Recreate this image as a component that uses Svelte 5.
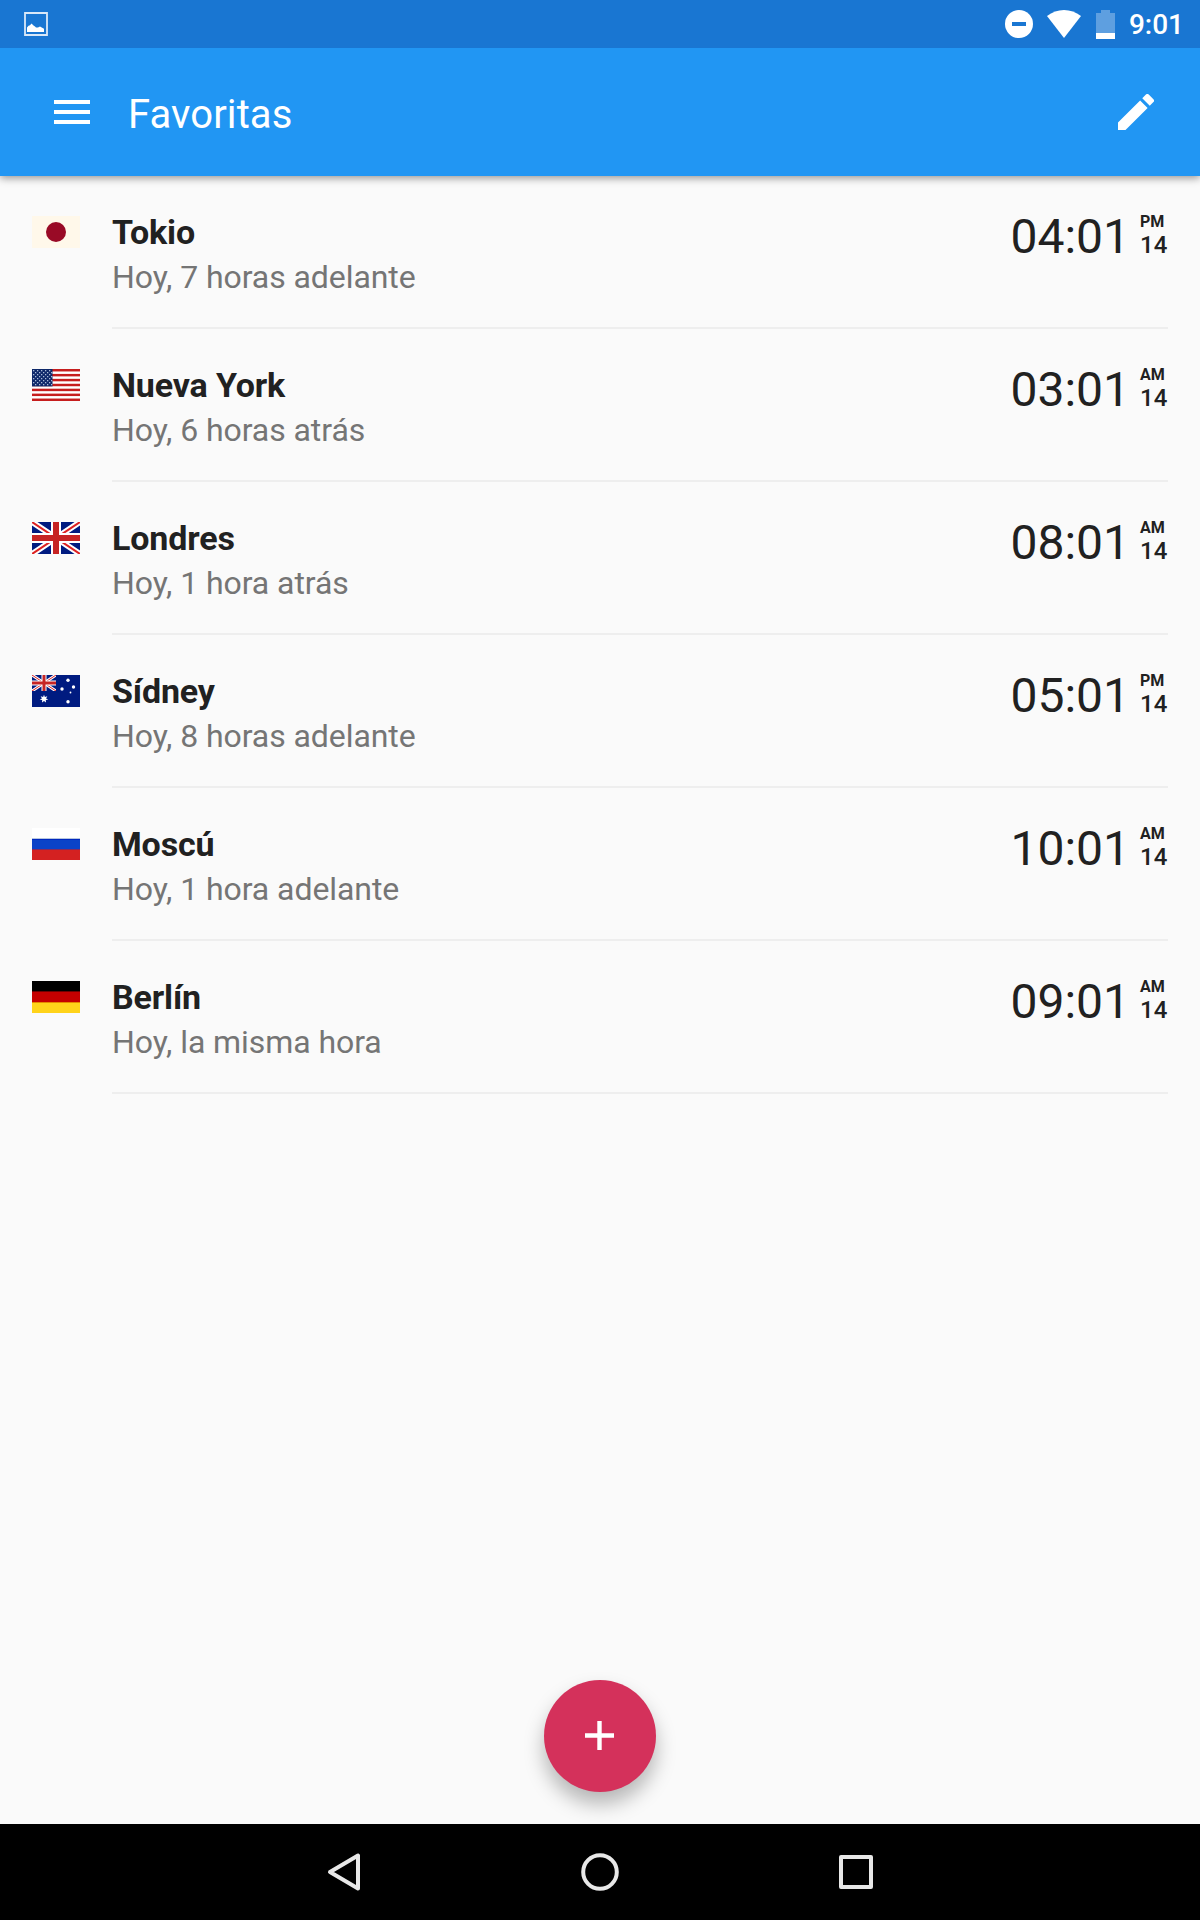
<script lang="ts">
  interface City {
    name: string;
    offset: string;
    time: string;
    period: string;
    day: number;
    flag: string;
  }

  const cities: City[] = [
    { name: "Tokio", offset: "Hoy, 7 horas adelante", time: "04:01", period: "PM", day: 14, flag: "jp" },
    { name: "Nueva York", offset: "Hoy, 6 horas atrás", time: "03:01", period: "AM", day: 14, flag: "us" },
    { name: "Londres", offset: "Hoy, 1 hora atrás", time: "08:01", period: "AM", day: 14, flag: "gb" },
    { name: "Sídney", offset: "Hoy, 8 horas adelante", time: "05:01", period: "PM", day: 14, flag: "au" },
    { name: "Moscú", offset: "Hoy, 1 hora adelante", time: "10:01", period: "AM", day: 14, flag: "ru" },
    { name: "Berlín", offset: "Hoy, la misma hora", time: "09:01", period: "AM", day: 14, flag: "de" },
  ];

  const stripes = [0, 1, 2, 3, 4, 5, 6];
  const starRows = [0, 1, 2, 3, 4, 5, 6, 7];
  const starCols = [0, 1, 2, 3, 4];
</script>

{#snippet unionJack()}
  <rect width="48" height="32" fill="#001b80" />
  <path d="M0 0 48 32M48 0 0 32" stroke="#fff" stroke-width="6" />
  <path d="M0 0 48 32M48 0 0 32" stroke="#d22" stroke-width="2" />
  <path d="M24 0V32M0 16H48" stroke="#fff" stroke-width="10" />
  <path d="M24 0V32M0 16H48" stroke="#c62424" stroke-width="6" />
{/snippet}

{#snippet flag(code: string)}
  <svg class="flag" viewBox="0 0 48 32" aria-hidden="true">
    {#if code === "jp"}
      <rect width="48" height="32" fill="#fff8ea" />
      <circle cx="24" cy="16" r="10" fill="#990a26" />
    {:else if code === "us"}
      <rect width="48" height="32" fill="#fff" />
      {#each stripes as i}
        <rect y={i * 4.923} width="48" height="2.46" fill="#c61d1d" />
      {/each}
      <rect width="20.5" height="17.4" fill="#0e2869" />
      {#each starRows as r}
        {#each starCols as c}
          <rect x={1 + c * 4 + (r % 2) * 2} y={1 + r * 2} width="1.3" height="1.3" fill="#a9bbd6" />
        {/each}
      {/each}
    {:else if code === "gb"}
      {@render unionJack()}
    {:else if code === "au"}
      <rect width="48" height="32" fill="#001b80" />
      <svg width="24" height="16" viewBox="0 0 48 32">
        {@render unionJack()}
      </svg>
      <path
        d="m12 19.8.9 2.3 2.4-.8-1.2 2.1 2.2 1.3-2.5.4.2 2.5-2-1.7-2 1.7.2-2.5-2.5-.4 2.2-1.3-1.2-2.1 2.4.8z"
        fill="#fff"
      />
      <g fill="#fff">
        <circle cx="36" cy="5.3" r="1.7" />
        <circle cx="30" cy="14" r="1.7" />
        <circle cx="41.5" cy="12" r="1.7" />
        <circle cx="38.5" cy="17.5" r=".9" />
        <circle cx="36" cy="26.8" r="1.7" />
      </g>
    {:else if code === "ru"}
      <rect width="48" height="32" fill="#fff" />
      <rect y="10" width="48" height="12" fill="#0b43c8" />
      <rect y="10" width="48" height="1" fill="#b6c6e0" />
      <rect y="11" width="48" height="1" fill="#0028c0" />
      <rect y="21" width="48" height="11" fill="#d42121" />
      <rect y="21" width="48" height="1" fill="#822b60" />
    {:else}
      <rect width="48" height="32" fill="#000" />
      <rect y="10" width="48" height="12" fill="#c50000" />
      <rect y="10" width="48" height="1" fill="#700000" />
      <rect y="21" width="48" height="11" fill="#ffd31a" />
      <rect y="21" width="48" height="1" fill="#e58a00" />
    {/if}
  </svg>
{/snippet}

<div class="screen">
  <div class="statusbar">
    <svg class="shot" viewBox="0 0 24 24" aria-hidden="true">
      <path d="M1 1H23V23H1z" fill="none" stroke="#d9e8f8" stroke-width="1.8" />
      <path d="M3 20v-4.5l1.5-1.7 1.5-.6 1.5-1.6 2 2 1.5.8 1 1.2 2-.1 2-.9 2.2 1.2 1.8 1v3.2z" fill="#fff" />
    </svg>
    <div class="status-icons">
      <svg class="dnd" viewBox="0 0 28 28" aria-hidden="true">
        <circle cx="14" cy="14" r="14" fill="#fff" />
        <rect x="7" y="12" width="14" height="4" fill="#1976d2" />
      </svg>
      <svg class="wifi" viewBox="0 0 34 28" aria-hidden="true">
        <path d="M0 6C5 2 11 0 17 0s12 2 17 6L17 28z" fill="#fff" />
      </svg>
      <svg class="battery" viewBox="0 0 19 29" aria-hidden="true">
        <path d="M5 0h9v3h5v20H0V3h5z" fill="#5e9fe0" />
        <rect y="23" width="19" height="6" fill="#fff" />
      </svg>
      <span class="clock">9:01</span>
    </div>
  </div>

  <header class="toolbar">
    <button type="button" class="icon-btn" aria-label="Menú">
      <svg class="menu" viewBox="0 0 36 24">
        <path d="M0 2H36M0 12H36M0 22H36" stroke="#fff" stroke-width="4" />
      </svg>
    </button>
    <h1>Favoritas</h1>
    <button type="button" class="icon-btn edit" aria-label="Editar">
      <svg class="pencil" viewBox="3 3 18 18">
        <path
          d="M3 17.25V21h3.75L17.81 9.94l-3.75-3.75L3 17.25zM20.71 7.04a1 1 0 0 0 0-1.41l-2.34-2.34a1 1 0 0 0-1.41 0l-1.83 1.83 3.75 3.75 1.83-1.83z"
          fill="#fff"
        />
      </svg>
    </button>
  </header>

  <main class="list">
    {#each cities as city}
      <div class="row">
        {@render flag(city.flag)}
        <div class="row-body">
          <div class="place">
            <div class="name">{city.name}</div>
            <div class="offset">{city.offset}</div>
          </div>
          <div class="time">{city.time}</div>
          <div class="meta">
            <div class="period">{city.period}</div>
            <div class="day">{city.day}</div>
          </div>
        </div>
      </div>
    {/each}
  </main>

  <div class="fab-area">
    <button type="button" class="fab" aria-label="Añadir">
      <svg viewBox="0 0 29 29">
        <path d="M14.5 0V29M0 14.5H29" stroke="#fff" stroke-width="4.4" />
      </svg>
    </button>
  </div>

  <nav class="navbar">
    <svg viewBox="0 0 48 48" aria-hidden="true">
      <path d="M38 7.5V40.5L10 24z" />
    </svg>
    <svg viewBox="0 0 48 48" aria-hidden="true">
      <circle cx="24" cy="24" r="16.8" />
    </svg>
    <svg viewBox="0 0 48 48" aria-hidden="true">
      <rect x="9" y="9" width="30" height="30" />
    </svg>
  </nav>
</div>

<style>
  :global(body) {
    margin: 0;
  }
  .screen {
    display: flex;
    flex-direction: column;
    width: 1200px;
    height: 1920px;
    background: #fafafa;
    color: #212121;
    font-family: Roboto, "Liberation Sans", sans-serif;
  }
  svg {
    display: block;
    flex: none;
  }
  button {
    padding: 0;
    border: none;
    background: transparent;
  }
  .statusbar {
    display: flex;
    align-items: center;
    justify-content: space-between;
    box-sizing: border-box;
    height: 48px;
    padding: 0 16px 0 24px;
    background: #1976d2;
    z-index: 1;
  }
  .shot {
    width: 24px;
    height: 24px;
  }
  .status-icons {
    display: flex;
    align-items: center;
  }
  .dnd {
    width: 28px;
    height: 28px;
    margin-right: 14px;
  }
  .wifi {
    width: 34px;
    height: 28px;
    margin-right: 15px;
  }
  .battery {
    width: 19px;
    height: 29px;
    margin-right: 14px;
  }
  .clock {
    padding-top: 2px;
    color: #fff;
    font-size: 28px;
    font-weight: 500;
    line-height: 46px;
  }
  .toolbar {
    display: flex;
    align-items: center;
    box-sizing: border-box;
    height: 128px;
    padding: 0 46px 0 54px;
    background: #2196f3;
    box-shadow: 0 2px 8px rgba(0, 0, 0, 0.42);
  }
  .menu {
    width: 36px;
    height: 24px;
  }
  .pencil {
    width: 36px;
    height: 36px;
  }
  h1 {
    margin: 0;
    padding: 6px 0 0 38px;
    color: #fff;
    font-size: 40px;
    font-weight: 400;
    letter-spacing: 0.1px;
    line-height: 48px;
  }
  .edit {
    margin-left: auto;
  }
  .list {
    flex: 1;
  }
  .row {
    display: flex;
    gap: 32px;
    box-sizing: border-box;
    height: 153px;
    padding: 0 32px;
  }
  .flag {
    width: 48px;
    height: 32px;
    margin-top: 40px;
  }
  .row-body {
    display: flex;
    flex: 1;
    border-bottom: 2px solid #eee;
  }
  .place {
    flex: 1;
    padding-top: 33px;
  }
  .name {
    font-size: 34px;
    font-weight: 700;
    letter-spacing: -0.15px;
    line-height: 46px;
  }
  .offset {
    color: #757575;
    font-size: 32px;
    letter-spacing: -0.07px;
    line-height: 44px;
  }
  .time {
    padding-top: 33px;
    font-size: 48px;
    line-height: 56px;
  }
  .meta {
    width: 28px;
    padding: 36px 0 0 10px;
  }
  .period {
    font-size: 16px;
    font-weight: 700;
    line-height: 20px;
  }
  .day {
    font-size: 24px;
    font-weight: 500;
    line-height: 26px;
  }
  .fab-area {
    display: flex;
    justify-content: center;
    padding-bottom: 32px;
  }
  .fab {
    display: flex;
    align-items: center;
    justify-content: center;
    box-sizing: border-box;
    width: 112px;
    height: 112px;
    padding: 0 1px 1px 0;
    border-radius: 50%;
    background: #d4315b;
    box-shadow: 0 12px 20px rgba(0, 0, 0, 0.28);
  }
  .fab svg {
    width: 29px;
    height: 29px;
  }
  .navbar {
    display: flex;
    align-items: center;
    justify-content: center;
    gap: 208px;
    height: 96px;
    background: #000;
    z-index: 1;
  }
  .navbar svg {
    width: 48px;
    height: 48px;
    fill: none;
    stroke: #e8e8e8;
    stroke-width: 4;
    stroke-linejoin: round;
  }
</style>
